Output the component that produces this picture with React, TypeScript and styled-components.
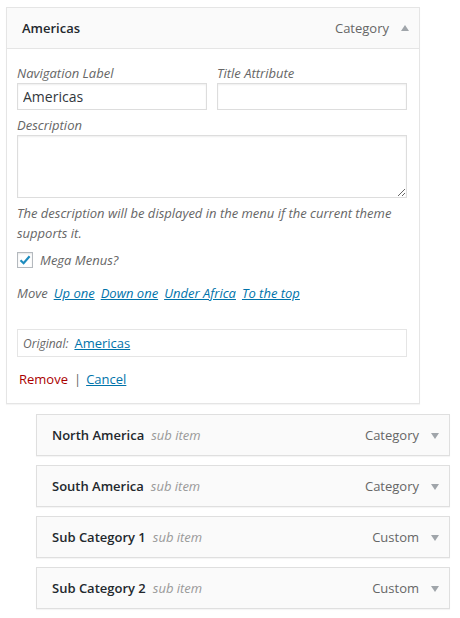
import React from "react";
import styled, { createGlobalStyle } from "styled-components";

const Global = createGlobalStyle`
  html, body { margin: 0; padding: 0; background: #fff; }
  body { font-family: "Open Sans", "Noto Sans", sans-serif; font-size: 13px; color: #444; }
  * { box-sizing: border-box; }
`;

const Page = styled.div`
  padding: 7px 0 0 6px;
  display: flex;
  flex-direction: column;
  width: 450px;
`;

const Card = styled.div`
  width: 414px;
  margin-bottom: 10px;
  border: 1px solid #e5e5e5;
  background: #fff;
  box-shadow: 0 1px 1px rgba(0, 0, 0, 0.04);
`;

const Handle = styled.div<{ $sub?: boolean }>`
  display: flex;
  align-items: center;
  height: ${(p) => (p.$sub ? "42px" : "41px")};
  padding: 0 10px 0 15px;
  background: #fafafa;
  ${(p) =>
    p.$sub
      ? `border: 1px solid #dfdfdf; width: 414px; margin: 0 0 9px 30px; box-shadow: 0 1px 1px rgba(0,0,0,0.04);`
      : `border-bottom: 1px solid #e5e5e5;`}
`;

const Title = styled.span`
  font-weight: 600;
  font-size: 13px;
  color: #23282d;
  line-height: 20px;
`;

const SubLabel = styled.span`
  font-style: italic;
  font-weight: 400;
  color: #999;
  margin-left: 7px;
  font-size: 13px;
`;

const Type = styled.span`
  margin-left: auto;
  color: #666;
  font-size: 13px;
  margin-right: 12px;
`;

const Arrow = styled.span<{ $up?: boolean }>`
  width: 0;
  height: 0;
  border-left: 4px solid transparent;
  border-right: 4px solid transparent;
  ${(p) =>
    p.$up ? `border-bottom: 6px solid #a0a5aa;` : `border-top: 6px solid #a0a5aa;`}
  margin-top: ${(p) => (p.$up ? "-1px" : "1px")};
`;

const Body = styled.div`
  padding: 14px 12px 14px 10px;
  display: flex;
  flex-direction: column;
`;

const FieldRow = styled.div`
  display: grid;
  grid-template-columns: 190px 190px;
  column-gap: 10px;
`;

const Field = styled.label`
  display: flex;
  flex-direction: column;
`;

const Label = styled.span`
  font-style: italic;
  color: #666;
  font-size: 13px;
  line-height: 20px;
`;

const Input = styled.input`
  height: 27px;
  width: 100%;
  border: 1px solid #ddd;
  box-shadow: inset 0 1px 2px rgba(0, 0, 0, 0.07);
  font-family: "Open Sans", sans-serif;
  font-size: 14px;
  color: #32373c;
  padding: 0 5px;
  margin: 0;
  outline: none;
`;

const TextArea = styled.textarea`
  height: 63px;
  width: 100%;
  border: 1px solid #ddd;
  box-shadow: inset 0 1px 2px rgba(0, 0, 0, 0.07);
  margin: 0;
  display: block;
  font-family: "Open Sans", sans-serif;
  resize: vertical;
`;

const Block = styled.div<{ $mt: number }>`
  margin-top: ${(p) => p.$mt}px;
`;

const Help = styled.p<{ $mt: number }>`
  margin: ${(p) => p.$mt}px 0 0;
  font-style: italic;
  color: #666;
  font-size: 13px;
  line-height: 20px;
`;

const CheckRow = styled.label`
  margin-top: 7px;
  display: flex;
  align-items: center;
  height: 20px;
  font-style: italic;
  color: #666;
`;

const Box = styled.span`
  width: 16px;
  height: 16px;
  border: 1px solid #b4b9be;
  box-shadow: inset 0 1px 2px rgba(0, 0, 0, 0.1);
  display: flex;
  align-items: center;
  justify-content: center;
  margin-right: 7px;
`;

const MoveRow = styled.div`
  margin-top: 13px;
  line-height: 20px;
  font-style: italic;
  color: #666;
  display: flex;
  gap: 6px;
`;

const Link = styled.a`
  color: #0073aa;
  text-decoration: underline;
  cursor: pointer;
`;

const Original = styled.div`
  margin-top: 26px;
  height: 28px;
  border: 1px solid #e5e5e5;
  display: flex;
  align-items: center;
  padding-left: 5px;
  gap: 6px;
`;

const OrigLabel = styled.span`
  font-style: italic;
  color: #666;
  font-size: 12px;
`;

const OrigLink = styled(Link)`
  font-size: 13px;
`;

const Actions = styled.div`
  margin-top: 12px;
  padding-left: 2px;
  line-height: 20px;
  display: flex;
  align-items: center;
`;

const Remove = styled.a`
  color: #a00;
  text-decoration: none;
`;

const Sep = styled.span`
  color: #666;
  margin: 0 5px 0 6px;
`;

const Cancel = styled.a`
  color: #0073aa;
  text-decoration: underline;
`;

const Check = () => (
  <svg width="14" height="14" viewBox="0 0 14 14">
    <path d="M2.5 7.2 L5.6 10.2 L11.6 3.2" fill="none" stroke="#1e8cbe" strokeWidth="2.2" />
  </svg>
);

const subs = [
  { name: "North America", type: "Category" },
  { name: "South America", type: "Category" },
  { name: "Sub Category 1", type: "Custom" },
  { name: "Sub Category 2", type: "Custom" },
];

export default function App() {
  return (
    <>
      <Global />
      <Page>
        <Card>
          <Handle>
            <Title>Americas</Title>
            <Type>Category</Type>
            <Arrow $up />
          </Handle>
          <Body>
            <FieldRow>
              <Field>
                <Label>Navigation Label</Label>
                <Input defaultValue="Americas" />
              </Field>
              <Field>
                <Label>Title Attribute</Label>
                <Input defaultValue="" />
              </Field>
            </FieldRow>
            <Block $mt={5}>
              <Field>
                <Label>Description</Label>
                <TextArea />
              </Field>
            </Block>
            <Help $mt={5}>
              The description will be displayed in the menu if the current theme supports it.
            </Help>
            <CheckRow>
              <Box>
                <Check />
              </Box>
              Mega Menus?
            </CheckRow>
            <MoveRow>
              <span>Move</span>
              <Link>Up one</Link>
              <Link>Down one</Link>
              <Link>Under Africa</Link>
              <Link>To the top</Link>
            </MoveRow>
            <Original>
              <OrigLabel>Original:</OrigLabel>
              <OrigLink>Americas</OrigLink>
            </Original>
            <Actions>
              <Remove>Remove</Remove>
              <Sep>|</Sep>
              <Cancel>Cancel</Cancel>
            </Actions>
          </Body>
        </Card>
        {subs.map((s) => (
          <Handle $sub key={s.name}>
            <Title>{s.name}</Title>
            <SubLabel>sub item</SubLabel>
            <Type>{s.type}</Type>
            <Arrow />
          </Handle>
        ))}
      </Page>
    </>
  );
}
